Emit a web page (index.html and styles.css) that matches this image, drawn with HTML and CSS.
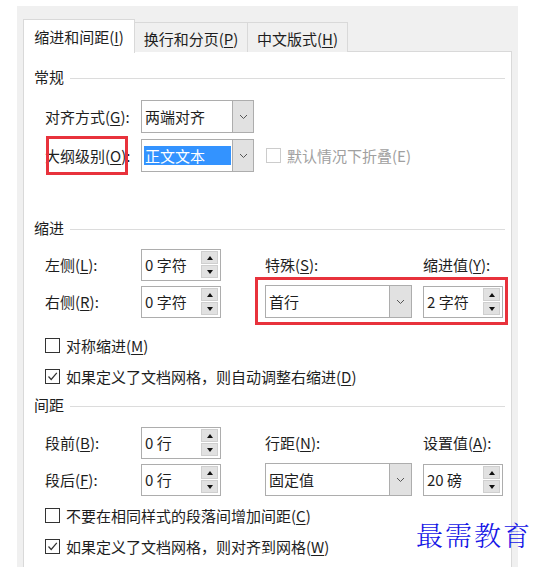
FILE: index.html
```html
<!DOCTYPE html>
<html lang="zh">
<head>
<meta charset="utf-8">
<link rel="stylesheet" href="styles.css">
</head>
<body>
<div class="dialog">
  <div class="tabs">
    <div class="tab active">缩进和间距(<u>I</u>)</div>
    <div class="tab t2">换行和分页(<u>P</u>)</div>
    <div class="tab t3">中文版式(<u>H</u>)</div>
  </div>
  <div class="panel">
    <div class="section-head h1"><span>常规</span><i></i></div>
    <div class="row r1">
      <span class="label">对齐方式(<u>G</u>):</span>
      <div class="select s-small"><span class="val">两端对齐</span><span class="btn"><svg width="9" height="6" viewBox="0 0 9 6"><path d="M1 1 L4.5 4.5 L8 1" fill="none" stroke="#555" stroke-width="1"/></svg></span></div>
    </div>
    <div class="row r2">
      <span class="label">大纲级别(<u>O</u>):</span>
      <div class="select s-small"><span class="val hl">正文文本</span><span class="btn"><svg width="9" height="6" viewBox="0 0 9 6"><path d="M1 1 L4.5 4.5 L8 1" fill="none" stroke="#555" stroke-width="1"/></svg></span></div>
      <span class="cb disabled"></span><span class="cb-text disabled-text">默认情况下折叠(E)</span>
    </div>

    <div class="section-head h2"><span>缩进</span><i></i></div>
    <div class="grid g1">
      <span class="label">左侧(<u>L</u>):</span>
      <div class="spin"><span class="val">0 字符</span><span class="arrows"><b class="up"></b><b class="dn"></b></span></div>
      <span class="label">特殊(<u>S</u>):</span>
      <span class="label">缩进值(<u>Y</u>):</span>
      <span class="label">右侧(<u>R</u>):</span>
      <div class="spin"><span class="val">0 字符</span><span class="arrows"><b class="up"></b><b class="dn"></b></span></div>
      <div class="select s-wide"><span class="val">首行</span><span class="btn"><svg width="9" height="6" viewBox="0 0 9 6"><path d="M1 1 L4.5 4.5 L8 1" fill="none" stroke="#555" stroke-width="1"/></svg></span></div>
      <div class="spin"><span class="val">2 字符</span><span class="arrows"><b class="up"></b><b class="dn"></b></span></div>
    </div>
    <div class="cbrow c1"><span class="cb"></span><span class="cb-text">对称缩进(<u>M</u>)</span></div>
    <div class="cbrow c2"><span class="cb checked"><svg width="13" height="13" viewBox="0 0 13 13"><path d="M2.5 6.5 L5.2 9.5 L10.8 2.8" fill="none" stroke="#333" stroke-width="1.2"/></svg></span><span class="cb-text">如果定义了文档网格，则自动调整右缩进(<u>D</u>)</span></div>

    <div class="section-head h3"><span>间距</span><i></i></div>
    <div class="grid g2">
      <span class="label">段前(<u>B</u>):</span>
      <div class="spin"><span class="val">0 行</span><span class="arrows"><b class="up"></b><b class="dn"></b></span></div>
      <span class="label">行距(<u>N</u>):</span>
      <span class="label">设置值(<u>A</u>):</span>
      <span class="label">段后(<u>F</u>):</span>
      <div class="spin"><span class="val">0 行</span><span class="arrows"><b class="up"></b><b class="dn"></b></span></div>
      <div class="select s-wide"><span class="val">固定值</span><span class="btn"><svg width="9" height="6" viewBox="0 0 9 6"><path d="M1 1 L4.5 4.5 L8 1" fill="none" stroke="#555" stroke-width="1"/></svg></span></div>
      <div class="spin"><span class="val">20 磅</span><span class="arrows"><b class="up"></b><b class="dn"></b></span></div>
    </div>
    <div class="cbrow c3"><span class="cb"></span><span class="cb-text">不要在相同样式的段落间增加间距(<u>C</u>)</span></div>
    <div class="cbrow c4"><span class="cb checked"><svg width="13" height="13" viewBox="0 0 13 13"><path d="M2.5 6.5 L5.2 9.5 L10.8 2.8" fill="none" stroke="#333" stroke-width="1.2"/></svg></span><span class="cb-text">如果定义了文档网格，则对齐到网格(<u>W</u>)</span></div>
  </div>
</div>
<div class="mark mark1"></div>
<div class="mark mark2"></div>
<div class="watermark">最需教育</div>
</body>
</html>
```
FILE: styles.css
```css
* { box-sizing: border-box; }
html, body { margin: 0; padding: 0; }
body {
  width: 539px;
  height: 567px;
  overflow: hidden;
  background: #ffffff;
  font-family: "Microsoft YaHei", "Noto Sans CJK SC", sans-serif;
  font-size: 15px;
  color: #1e1e1e;
  position: relative;
}
u { text-decoration: underline; text-underline-offset: 2px; text-decoration-thickness: 1px; }

.dialog {
  margin: 6px 0 0 17px;
  width: 501px;
  height: 561px;
  background: #f0f0f0;
  padding: 13px 0 0 6px;
}
.tabs { display: flex; height: 33px; position: relative; z-index: 2; }
.tab {
  display: flex;
  align-items: center;
  justify-content: center;
  border: 1px solid #d9d9d9;
  border-bottom: none;
  background: #f0f0f0;
  margin-top: 3px;
  height: 30px;
  padding-top: 2px;
}
.tab.active { width: 112px; height: 34px; margin-top: 0; background: #fff; padding-top: 0; }
.tab.t2 { width: 113px; border-left: none; }
.tab.t3 { width: 100px; border-left: none; }

.panel {
  margin-top: -1px;
  width: 489px;
  height: 520px;
  background: #fff;
  border: 1px solid #d9d9d9;
  border-bottom: none;
  padding: 0 6px 0 10px;
}
.section-head { display: flex; align-items: center; height: 20px; }
.section-head i { flex: 1; height: 1px; background: #dcdcdc; margin: 4px 0 0 6px; }
.h1 { margin-top: 14px; }
.h2 { margin-top: 45px; }
.h3 { margin-top: 8px; }

.row { display: flex; align-items: center; height: 33px; padding-left: 11px; }
.r1 { margin-top: 14px; }
.r2 { margin-top: 6px; }
.label { width: 96px; white-space: nowrap; }

.select {
  display: flex;
  height: 33px;
  border: 1px solid #adadad;
  background: #fff;
}
.s-small { width: 113px; }
.s-wide { width: 147px; }
.select .val { flex: 1; display: flex; align-items: center; padding-left: 3px; }
.select .btn {
  width: 21px;
  background: #e1e1e1;
  border-left: 1px solid #adadad;
  display: flex;
  align-items: center;
  justify-content: center;
}
.s-wide .btn { width: 22px; }
.val.hl { flex: 0 0 87px; margin: 6px 0 6px 2px; padding-left: 1px; background: #3393ff; color: #fff; }
.s-small .val.hl + .btn { margin-left: auto; }

.cb {
  width: 15px;
  height: 15px;
  border: 1px solid #333;
  background: #fff;
  display: inline-flex;
  align-items: center;
  justify-content: center;
  flex: 0 0 auto;
}
.cb.disabled { border-color: #cccccc; margin-left: 12px; }
.cb-text { margin-left: 6px; white-space: nowrap; }
.disabled-text { color: #a0a0a0; }

.grid {
  display: grid;
  grid-template-columns: 96px 80px 147px 80px;
  grid-template-rows: 33px 33px;
  column-gap: 0;
  row-gap: 4px;
  padding-left: 11px;
  align-items: center;
}
.grid > :nth-child(3), .grid > :nth-child(7) { margin-left: 44px; }
.grid > :nth-child(4), .grid > :nth-child(8) { margin-left: 55px; }
.grid .s-wide { width: 147px; }
.g1 { margin-top: 11px; }
.g2 { margin-top: 12px; }

.spin {
  display: flex;
  width: 80px;
  height: 32px;
  border: 1px solid #adadad;
  background: #fff;
  align-items: center;
}
.spin .val { flex: 1; padding-left: 3px; }
.spin .arrows { display: flex; flex-direction: column; gap: 1px; margin-right: 2px; }
.spin .arrows b {
  width: 17px;
  height: 13px;
  background: #e1e1e1;
  border: 1px solid #cfcfcf;
  display: flex;
  align-items: center;
  justify-content: center;
}
.spin .arrows b::after { content: ""; width: 0; height: 0; border-left: 3px solid transparent; border-right: 3px solid transparent; }
.spin .arrows .up::after { border-bottom: 4px solid #111; }
.spin .arrows .dn::after { border-top: 4px solid #111; }

.cbrow { display: flex; align-items: center; height: 20px; padding-left: 11px; }
.c1 { margin-top: 17px; }
.c2 { margin-top: 11px; }
.c3 { margin-top: 9px; }
.c4 { margin-top: 11px; }

.mark { position: absolute; border: 3px solid #e8323c; z-index: 5; }
.mark1 { left: 46px; top: 136px; width: 82px; height: 39px; }
.mark2 { left: 255px; top: 277px; width: 253px; height: 48px; }

.watermark {
  position: absolute;
  left: 416px;
  top: 517px;
  font-family: "Noto Serif CJK SC", "AR PL UKai CN", "Noto Sans CJK SC", serif;
  font-size: 27px;
  font-weight: 300;
  letter-spacing: 2px;
  color: #1414e6;
  z-index: 6;
  line-height: 36px;
}
```
